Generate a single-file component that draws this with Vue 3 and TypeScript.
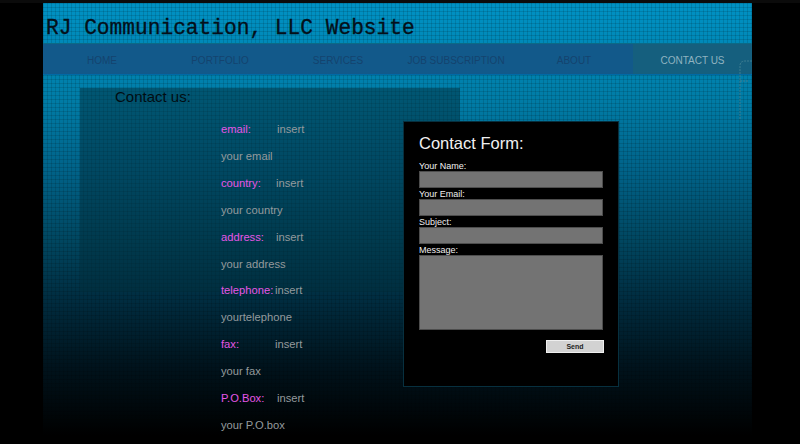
<script setup lang="ts">
const navItems = ['HOME', 'PORTFOLIO', 'SERVICES', 'JOB SUBSCRIPTION', 'ABOUT', 'CONTACT US'];

const contacts = [
  { label: 'email:', value: 'your email', labelWidth: 56 },
  { label: 'country:', value: 'your country', labelWidth: 55 },
  { label: 'address:', value: 'your address', labelWidth: 55 },
  { label: 'telephone:', value: 'yourtelephone', labelWidth: 54 },
  { label: 'fax:', value: 'your fax', labelWidth: 54 },
  { label: 'P.O.Box:', value: 'your P.O.box', labelWidth: 56 },
];
</script>

<template>
  <div class="page">
    <div class="site">
      <header class="site-header">
        <h1>RJ Communication, LLC Website</h1>
      </header>

      <nav class="site-nav">
        <a
          v-for="item in navItems"
          :key="item"
          href="#"
          class="site-nav__item"
          :class="{ 'site-nav__item--active': item === 'CONTACT US' }"
        >{{ item }}</a>
      </nav>

      <svg class="scribble" width="13" height="62" viewBox="0 0 13 62" fill="none">
        <path d="M13 1H6Q1 1 1 6V21M1 21H9M1 21V59" stroke="#3f7f92" stroke-width="1" stroke-dasharray="2 1" />
      </svg>

      <main class="content">
        <section class="panel">
          <h2>Contact us:</h2>
          <ul class="contact-list">
            <template v-for="row in contacts" :key="row.label">
              <li>
                <span class="contact-list__label" :style="{ width: row.labelWidth + 'px' }">{{ row.label }}</span>insert
              </li>
              <li>{{ row.value }}</li>
            </template>
          </ul>
        </section>
      </main>

      <form class="contact-form" @submit.prevent>
        <h3>Contact Form:</h3>
        <label for="cf-name">Your Name:</label>
        <input id="cf-name" type="text" />
        <label for="cf-email">Your Email:</label>
        <input id="cf-email" type="text" />
        <label for="cf-subject">Subject:</label>
        <input id="cf-subject" type="text" />
        <label for="cf-message">Message:</label>
        <textarea id="cf-message"></textarea>
        <button type="submit">Send</button>
      </form>
    </div>
  </div>
</template>

<style>
html,
body {
  margin: 0;
  background: #000;
}
</style>

<style scoped>
.page {
  width: 800px;
  height: 444px;
  overflow: hidden;
  background: #000;
  font-family: "Liberation Sans", Arial, sans-serif;
}

.page::before {
  content: "";
  display: block;
  width: 100%;
  height: 3px;
  background: #0b0b0b;
}

.site {
  position: relative;
  width: 709px;
  height: 441px;
  margin-left: 43px;
  background:
    repeating-linear-gradient(90deg, rgba(0, 0, 0, 0.12) 0 1px, transparent 1px 4px),
    repeating-linear-gradient(0deg, rgba(0, 0, 0, 0.12) 0 1px, transparent 1px 4px),
    linear-gradient(180deg, #0092c4 0%, #007ca6 22%, #006288 38%, #004862 53%, #002b3e 68%, #00121b 83%, #000 98%);
}

.site-header {
  height: 40px;
  box-sizing: border-box;
  padding: 13px 0 0 3px;
}

.site-header h1 {
  margin: 0;
  font-family: "Liberation Mono", monospace;
  font-size: 21.2px;
  line-height: 24px;
  font-weight: 400;
  color: #04101a;
  -webkit-text-stroke: 0.3px #04101a;
  white-space: nowrap;
}

.site-nav {
  display: grid;
  grid-template-columns: repeat(5, 118px) 119px;
  grid-template-rows: 30px;
  height: 30px;
  background: #12598a;
  border-top: 1px solid #0c6a86;
  box-shadow: 0 1px 0 #006aa6;
}

.site-nav__item {
  font-size: 10px;
  line-height: 33px;
  text-align: center;
  text-decoration: none;
  color: #14436e;
}

.site-nav__item--active {
  background: #155f7e;
  color: #8fb3c0;
}

.scribble {
  position: absolute;
  right: 0;
  top: 57px;
}

.content {
  padding: 14px 0 0 37px;
}

.panel {
  box-sizing: border-box;
  width: 380px;
  height: 204px;
  padding: 0 0 0 35px;
  background: rgba(0, 45, 60, 0.5);
}

.panel h2 {
  margin: 0;
  font-size: 15px;
  line-height: 18px;
  font-weight: 400;
  color: #020d13;
}

.contact-list {
  list-style: none;
  margin: 0;
  padding: 10px 0 0 106px;
  width: 200px;
  font-size: 11.2px;
  line-height: 26.9px;
  color: #949a9d;
}

.contact-list__label {
  display: inline-block;
  color: #e656e6;
}

.contact-form {
  position: absolute;
  left: 360px;
  top: 118px;
  box-sizing: border-box;
  width: 216px;
  height: 266px;
  padding: 11px 16px 0 15px;
  background: #000;
  border: 1px solid #07303f;
  color: #f0f0f0;
}

.contact-form h3 {
  margin: 0 0 6px;
  font-size: 16.5px;
  line-height: 21px;
  font-weight: 400;
}

.contact-form label {
  display: block;
  height: 11px;
  font-size: 9px;
  line-height: 13px;
}

.contact-form input,
.contact-form textarea {
  display: block;
  box-sizing: border-box;
  width: 184px;
  height: 17px;
  margin: 0;
  padding: 0;
  background: #737373;
  border: 1px solid #4d4d4d;
  border-radius: 0;
  resize: none;
}

.contact-form textarea {
  height: 75px;
}

.contact-form button {
  display: block;
  box-sizing: border-box;
  width: 58px;
  height: 13px;
  margin: 10px 0 0 127px;
  padding: 0;
  background: #d2d2d2;
  border: 1px solid #efefef;
  border-radius: 0;
  font-family: "Liberation Sans", Arial, sans-serif;
  font-size: 7px;
  font-weight: 700;
  line-height: 11px;
  color: #222;
}
</style>
